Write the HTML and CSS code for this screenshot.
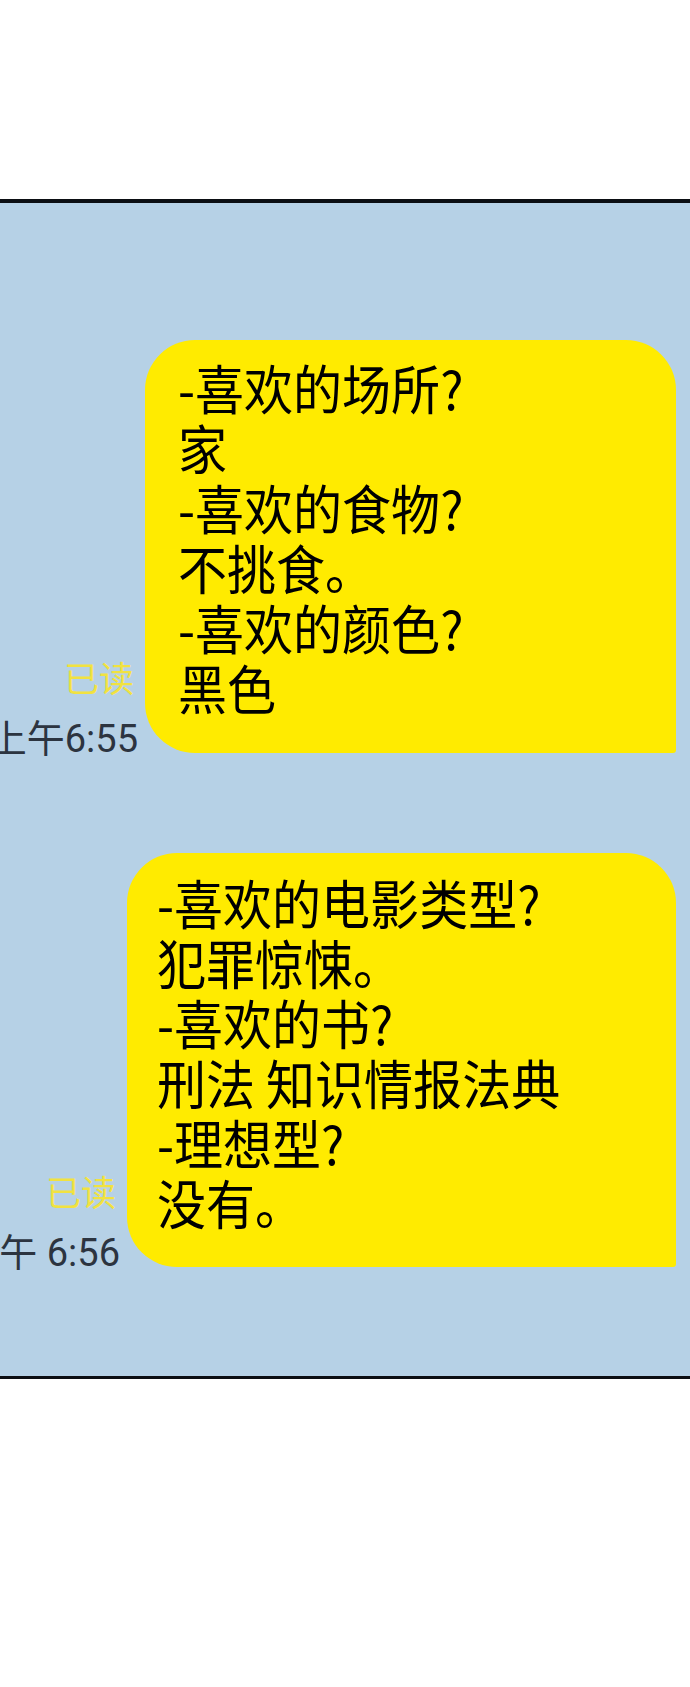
FILE: index.html
```html
<!DOCTYPE html>
<html lang="zh-CN">
<head>
    <meta charset="UTF-8">
    <meta name="viewport" content="width=device-width, initial-scale=1.0">
    <title>聊天记录</title>
    <link rel="stylesheet" href="styles.css">
</head>
<body>

    <div class="blank-top"></div>

    <!-- 聊天画面 -->
    <section class="chat">

        <div class="row">
            <div class="meta">
                <div class="read">已读</div>
                <div class="time">上午6:55</div>
            </div>
            <div class="bubble bubble-one">
                <p>-喜欢的场所?</p>
                <p>家</p>
                <p>-喜欢的食物?</p>
                <p>不挑食。</p>
                <p>-喜欢的颜色?</p>
                <p>黑色</p>
            </div>
        </div>

        <div class="row">
            <div class="meta">
                <div class="read">已读</div>
                <div class="time">上午 6:56</div>
            </div>
            <div class="bubble bubble-two">
                <p>-喜欢的电影类型?</p>
                <p>犯罪惊悚。</p>
                <p>-喜欢的书?</p>
                <p>刑法 知识情报法典</p>
                <p>-理想型?</p>
                <p>没有。</p>
            </div>
        </div>

    </section>

</body>
</html>
```

FILE: styles.css
```css
body {
    margin: 0;
    background-color: #ffffff;
    font-family: Roboto, "Noto Sans CJK SC", sans-serif;
    overflow-x: hidden;
}
.blank-top {
    height: 199px;
}
.chat {
    background-color: #b6d1e6;
    border-top: 4px solid #0b0e13;
    border-bottom: 3px solid #0b0e13;
    padding: 137px 14px 109px 0;
    display: flex;
    flex-direction: column;
    gap: 100px;
}
.row {
    display: flex;
    justify-content: flex-end;
    align-items: flex-end;
    gap: 7px;
}
.meta {
    flex: none;
    display: flex;
    flex-direction: column;
    align-items: flex-end;
    white-space: nowrap;
    margin-bottom: -8px;
}
.read {
    font-family: "Noto Sans CJK SC", sans-serif;
    font-size: 35px;
    line-height: 36px;
    color: #f1e240;
    margin: 0 4px 22px 0;
}
.time {
    font-size: 38px;
    line-height: 44px;
    color: #2c3440;
}
.bubble {
    flex: none;
    box-sizing: border-box;
    background-color: #ffeb00;
    border-radius: 50px 50px 3px 50px;
    font-family: "Noto Sans CJK SC", sans-serif;
    font-size: 53px;
    line-height: 60px;
    color: #000000;
}
/* the lettering in the shot is a narrow face */
.bubble p {
    margin: 0;
    white-space: nowrap;
    transform: scaleX(0.925);
    transform-origin: left center;
}
.bubble-one {
    width: 531px;
    padding: 17px 20px 36px 33px;
}
.bubble-two {
    width: 549px;
    padding: 19px 20px 35px 30px;
}
```
